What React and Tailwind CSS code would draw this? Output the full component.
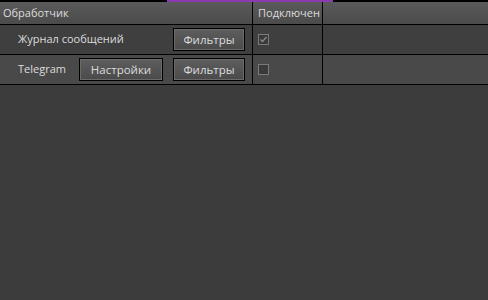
import React from "react";

const rows = [
  { name: "Журнал сообщений", settings: false, enabled: true, bg: "bg-[#3f3f3f]" },
  { name: "Telegram", settings: true, enabled: false, bg: "bg-[#494949]" },
];

const Button = ({ children, className }) => (
  <button
    className={`h-[23px] border border-black bg-gradient-to-b from-[#5e5e5e] to-[#4a4a4a] text-[11.5px] text-[#dcdcdc] shadow-[inset_0_0_0_1px_#6a6a6a] ${className}`}
  >
    {children}
  </button>
);

const Checkbox = ({ checked }) => (
  <div className="w-[11px] h-[11px] border border-[#7a7a7a] bg-[#3a3a3a] flex items-center justify-center">
    {checked && (
      <svg width="9" height="9" viewBox="0 0 9 9">
        <path d="M1.5 4.5 L3.5 6.5 L7.5 2" stroke="#8a8a8a" strokeWidth="1.3" fill="none" />
      </svg>
    )}
  </div>
);

const App = () => {
  return (
    <div
      className="w-[488px] h-[300px] bg-[#3c3c3c] overflow-hidden"
      style={{ fontFamily: '"Open Sans", "DejaVu Sans", sans-serif' }}
    >
      <div className="h-[2px] bg-black flex">
        <div className="ml-[167px] w-[166px] h-[2px] bg-[#8a3bb0]" />
      </div>
      <div className="flex h-[23px] border-b border-black bg-gradient-to-b from-[#5a5a5a] to-[#4b4b4b] text-[11px] text-[#dcdcdc]">
        <div className="w-[252px] pl-[3px] flex items-center">Обработчик</div>
        <div className="w-[70px] border-l border-black pl-[5px] flex items-center whitespace-nowrap overflow-hidden">Подключен</div>
        <div className="flex-1 border-l border-black" />
      </div>
      {rows.map((row) => (
        <div key={row.name} className={`flex h-[30px] border-b border-black ${row.bg}`}>
          <div className="w-[252px] flex items-center">
            <div className="w-[79px] pl-[18px] text-[11px] text-[#dcdcdc] whitespace-nowrap">{row.name}</div>
            {row.settings ? <Button className="w-[84px]">Настройки</Button> : <div className="w-[84px]" />}
            <Button className="w-[72px] ml-[10px]">Фильтры</Button>
          </div>
          <div className="w-[70px] border-l border-black pl-[5px] flex items-center">
            <Checkbox checked={row.enabled} />
          </div>
          <div className="flex-1 border-l border-black" />
        </div>
      ))}
    </div>
  );
};

export default App;
